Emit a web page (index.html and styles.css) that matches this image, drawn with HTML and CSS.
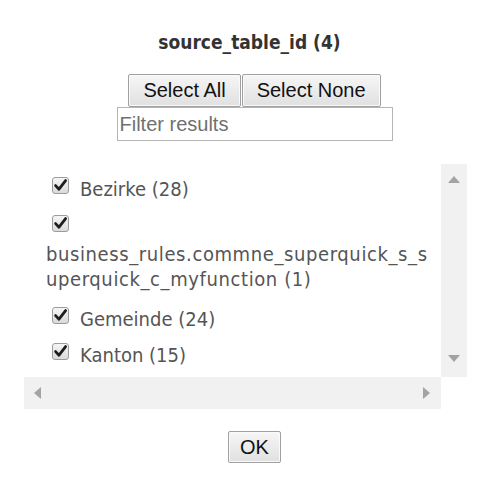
FILE: index.html
```html
<!DOCTYPE html>
<html>
<head>
<meta charset="utf-8">
<link rel="stylesheet" href="styles.css">
</head>
<body>
<div class="dialog">
  <h1 class="title">source_table_id (4)</h1>
  <div class="actions">
    <button class="btn">Select All</button><button class="btn">Select None</button>
  </div>
  <input class="filter" type="text" placeholder="Filter results">
  <div class="listbox">
    <div class="list">
      <div class="item">
        <span class="box"><svg viewBox="0 0 17 17" width="17" height="17"><path d="M3.6 8.6 L7 12.2 L13.6 3.6" fill="none" stroke="#1e1e1e" stroke-width="2.8" stroke-linecap="round" stroke-linejoin="round"/></svg></span>
        <span class="label">Bezirke (28)</span>
      </div>
      <div class="item wrap">
        <span class="box"><svg viewBox="0 0 17 17" width="17" height="17"><path d="M3.6 8.6 L7 12.2 L13.6 3.6" fill="none" stroke="#1e1e1e" stroke-width="2.8" stroke-linecap="round" stroke-linejoin="round"/></svg></span>
        <span class="label">business_rules.commne_superquick_s_s<br>uperquick_c_myfunction (1)</span>
      </div>
      <div class="item">
        <span class="box"><svg viewBox="0 0 17 17" width="17" height="17"><path d="M3.6 8.6 L7 12.2 L13.6 3.6" fill="none" stroke="#1e1e1e" stroke-width="2.8" stroke-linecap="round" stroke-linejoin="round"/></svg></span>
        <span class="label">Gemeinde (24)</span>
      </div>
      <div class="item">
        <span class="box"><svg viewBox="0 0 17 17" width="17" height="17"><path d="M3.6 8.6 L7 12.2 L13.6 3.6" fill="none" stroke="#1e1e1e" stroke-width="2.8" stroke-linecap="round" stroke-linejoin="round"/></svg></span>
        <span class="label">Kanton (15)</span>
      </div>
    </div>
    <div class="vbar">
      <span class="arrow up"></span>
      <span class="arrow down"></span>
    </div>
    <div class="hbar">
      <span class="arrow left"></span>
      <span class="arrow right"></span>
    </div>
    <div class="corner"></div>
  </div>
  <div class="footer">
    <button class="btn ok">OK</button>
  </div>
</div>
</body>
</html>
```
FILE: styles.css
```css
html, body {
  margin: 0;
  padding: 0;
  background: #fff;
}
.dialog {
  width: 491px;
  height: 500px;
  display: flex;
  flex-direction: column;
  align-items: center;
  font-family: "DejaVu Sans Condensed", "DejaVu Sans", sans-serif;
}
.title {
  margin: 29px 0 0 8px;
  height: 26px;
  font-size: 19px;
  line-height: 26px;
  font-weight: bold;
  color: #333;
}
.actions {
  margin: 19px 0 0 18px;
  display: flex;
}
.btn {
  font-family: "Liberation Sans", Arial, sans-serif;
  font-size: 20px;
  color: #111;
  height: 33px;
  padding: 0 14px;
  border: 1px solid #a0a0a0;
  border-radius: 2px;
  background: linear-gradient(#f6f6f6, #e0e0e0);
  box-shadow: inset 0 0 0 1px #fafafa;
}
.actions .btn + .btn {
  margin-left: 1px;
}
.filter {
  box-sizing: border-box;
  width: 276px;
  height: 34px;
  margin: 0 0 0 18px;
  padding: 0 2px;
  border: 1px solid #b5b5b5;
  font-family: "Liberation Sans", Arial, sans-serif;
  font-size: 20px;
  color: #333;
  outline: none;
}
.filter::placeholder {
  color: #707070;
}
.listbox {
  margin-top: 23px;
  width: 443px;
  display: grid;
  grid-template-columns: 1fr 26px;
  grid-template-rows: 213px 32px;
}
.list {
  overflow: hidden;
  padding: 12px 0 0 22px;
  color: #555;
  font-size: 20px;
}
.item {
  display: flex;
  align-items: flex-start;
  line-height: 26px;
  margin-bottom: 10px;
  white-space: nowrap;
}
.box {
  flex: none;
  box-sizing: border-box;
  width: 17px;
  height: 17px;
  margin: 1px 11px 0 6px;
  border: 1px solid #9c9c9c;
  border-radius: 3px;
  background: linear-gradient(#f5f5f5, #dadada);
  position: relative;
}
.box svg {
  position: absolute;
  left: -1px;
  top: -1px;
}
.item.wrap {
  flex-direction: column;
  margin-bottom: 14px;
}
.item.wrap .box {
  margin: 3px 0 10px 6px;
}
.item.wrap .label {
  line-height: 25px;
  letter-spacing: 0.6px;
}
.vbar {
  background: #f1f1f1;
  display: flex;
  flex-direction: column;
  justify-content: space-between;
  align-items: center;
  padding: 12px 0 15px;
}
.hbar {
  background: #f1f1f1;
  display: flex;
  justify-content: space-between;
  align-items: center;
  padding: 0 11px 0 10px;
}
.corner {
  background: #fff;
}
.arrow {
  width: 0;
  height: 0;
  border: 0 solid transparent;
}
.arrow.up {
  border-width: 0 6px 7px;
  border-bottom-color: #a3a3a3;
}
.arrow.down {
  border-width: 7px 6px 0;
  border-top-color: #a3a3a3;
}
.arrow.left {
  border-width: 6px 7px 6px 0;
  border-right-color: #a3a3a3;
}
.arrow.right {
  border-width: 6px 0 6px 7px;
  border-left-color: #a3a3a3;
}
.footer {
  margin: 22px 0 0 18px;
}
.btn.ok {
  height: 32px;
  padding: 0 11px;
}
```
